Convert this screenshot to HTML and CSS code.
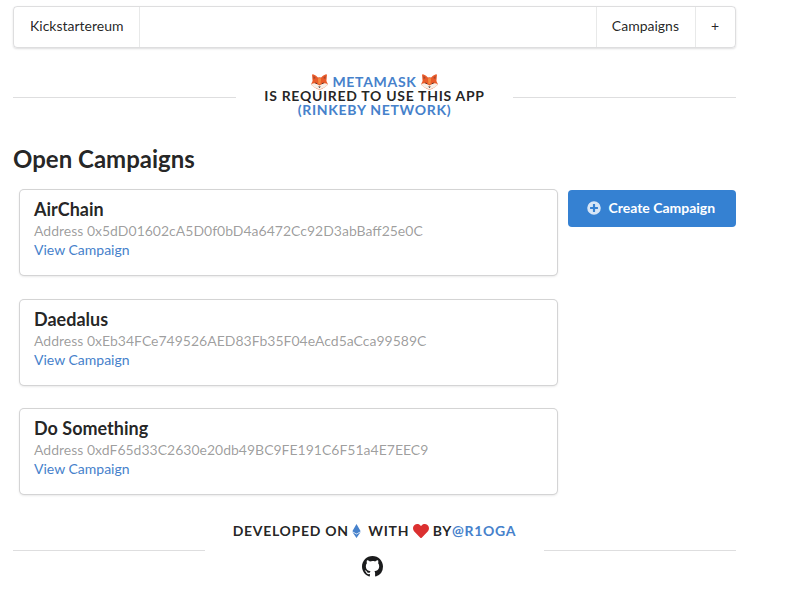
FILE: index.html
```html
<!DOCTYPE html>
<html lang="en">
<head>
<meta charset="utf-8">
<title>Kickstartereum</title>
<link rel="stylesheet" href="styles.css">
</head>
<body>
<svg width="0" height="0" class="sprite" aria-hidden="true">
  <symbol id="fox" viewBox="0 0 32 32" preserveAspectRatio="none">
    <path fill="#ea5b2a" d="M2 2Q2 0 5 1Q10 3 13 7Q16 6 19 7Q22 3 27 1Q30 0 30 2L29 14L32 21Q27 26 22 29Q16 33 10 29Q5 26 0 21L3 14Z"/>
    <path fill="#a3482f" d="M4.500 4Q7 5 9 8L5 10ZM27.500 4Q25 5 23 8L27 10Z"/>
    <path fill="#f28a42" d="M13 9Q16 7 19 9L18 20H14Z"/>
    <path fill="#f8efe6" d="M0 21Q6 17 11 20L16 23L21 20Q26 17 32 21Q27 27 21 29Q16 32 11 29Q5 27 0 21Z"/>
    <path fill="#3c2925" d="M7 17Q11 17 12.500 20.500Q9 20.500 7 17ZM25 17Q21 17 19.500 20.500Q23 20.500 25 17ZM13.500 25H18.500L16 28Z"/>
  </symbol>
</svg>
<div class="container">
  <nav class="menu">
    <a class="item brand">Kickstartereum</a>
    <div class="right">
      <a class="item">Campaigns</a>
      <a class="item plus">+</a>
    </div>
  </nav>
  <div class="divider notice">
    <div class="label">
      <div class="metamask"><svg class="fox"><use href="#fox"/></svg><a>Metamask</a><svg class="fox"><use href="#fox"/></svg></div>
      <div>is required to use this app</div>
      <div><a>(Rinkeby Network)</a></div>
    </div>
  </div>
  <h3>Open Campaigns</h3>
  <main>
    <div class="cards">
      <article class="card"><h4>AirChain</h4><p>Address 0x5dD01602cA5D0f0bD4a6472Cc92D3abBaff25e0C</p><a>View Campaign</a></article>
      <article class="card"><h4>Daedalus</h4><p>Address 0xEb34FCe749526AED83Fb35F04eAcd5aCca99589C</p><a>View Campaign</a></article>
      <article class="card"><h4>Do Something</h4><p>Address 0xdF65d33C2630e20db49BC9FE191C6F51a4E7EEC9</p><a>View Campaign</a></article>
    </div>
    <button class="create">
      <svg viewBox="0 0 512 512"><path fill="currentColor" fill-rule="evenodd" d="M256 8a248 248 0 1 0 0 496 248 248 0 0 0 0-496zm144 276c0 7-5 12-12 12h-92v92c0 7-5 12-12 12h-56c-7 0-12-5-12-12v-92h-92c-7 0-12-5-12-12v-56c0-7 5-12 12-12h92v-92c0-7 5-12 12-12h56c7 0 12 5 12 12v92h92c7 0 12 5 12 12z"/></svg>
      <span>Create Campaign</span>
    </button>
  </main>
  <footer class="divider">
    <div class="label">
      <div class="credit"><span>Developed on</span><svg class="eth" viewBox="0 0 320 512"><path fill="currentColor" d="M312 261 160 353 8 261 160 0zM160 383 8 291l152 221 152-221z"/></svg><span>with</span><svg class="heart" viewBox="0 0 512 512"><path fill="currentColor" d="M462 62c-55-46-136-38-186 14l-20 20-20-20C186 24 105 16 50 62c-63 54-66 150-10 208l193 200c13 13 33 13 46 0l193-200c56-58 53-154-10-208z"/></svg><span>by</span><a>@r1oga</a></div>
      <svg class="github" viewBox="0 0 16 16"><path fill="currentColor" d="M8 0C3.58 0 0 3.58 0 8c0 3.54 2.29 6.53 5.47 7.59.4.07.55-.17.55-.38 0-.19-.01-.82-.01-1.49-2.01.37-2.53-.49-2.69-.94-.09-.23-.48-.94-.82-1.13-.28-.15-.68-.52-.01-.53.63-.01 1.08.58 1.23.82.72 1.21 1.87.87 2.33.66.07-.52.28-.87.51-1.07-1.78-.2-3.64-.89-3.64-3.95 0-.87.31-1.59.82-2.15-.08-.2-.36-1.02.08-2.12 0 0 .67-.21 2.2.82A7.6 7.6 0 0 1 8 3.86c.68 0 1.36.09 2 .27 1.53-1.04 2.2-.82 2.2-.82.44 1.1.16 1.92.08 2.12.51.56.82 1.27.82 2.15 0 3.07-1.87 3.75-3.65 3.95.29.25.54.73.54 1.48 0 1.07-.01 1.93-.01 2.2 0 .21.15.46.55.38A8 8 0 0 0 16 8c0-4.42-3.58-8-8-8z"/></svg>
    </div>
  </footer>
</div>
</body>
</html>
```

FILE: styles.css
```css
* { box-sizing: border-box; }
body { margin: 0; background: #fff; color: rgba(0,0,0,.87); font: 14px/20px Lato, "Liberation Sans", sans-serif; overflow: hidden; }
a { color: #4681cb; }
.sprite { display: block; }
.container { width: 723px; margin: 6px 0 0 13px; }
.menu { display: flex; height: 42px; border: 1px solid rgba(34,36,38,.15); border-radius: 4px; box-shadow: 0 1px 2px rgba(34,36,38,.15); }
.menu .item { display: flex; align-items: center; padding: 0 16px 2px; color: rgba(0,0,0,.87); line-height: 14px; }
.brand { border-right: 1px solid rgba(34,36,38,.1); }
.right { display: flex; margin-left: auto; }
.right .item { border-left: 1px solid rgba(34,36,38,.1); padding-left: 15px; }
.menu .plus { width: 40px; }
.divider { display: flex; align-items: center; text-align: center; font-weight: 700; line-height: 14px; letter-spacing: .7px; text-transform: uppercase; }
.divider::before, .divider::after { content: ""; flex: 1; height: 1px; background: rgba(34,36,38,.15); }
.divider .label { padding: 0 28px; }
.notice { margin-top: 27px; height: 42px; }
.notice::before, .notice::after { margin-top: 2px; }
.notice .label div { height: 14px; white-space: nowrap; }
.notice .metamask { display: flex; justify-content: center; align-items: center; gap: 4px; }
.fox { width: 17px; height: 16px; flex: none; }
h3 { margin: 26px 0 0; height: 31px; font-size: 24px; line-height: 31px; font-weight: 700; }
main { display: flex; justify-content: space-between; align-items: flex-start; margin-top: 16px; }
.cards { display: flex; flex-direction: column; gap: 24.5px; margin-left: 7px; width: 537px; }
.card { height: 85px; padding: 9px 14px; border-radius: 4px; box-shadow: 0 1px 3px #d4d4d5, 0 0 0 1px #d4d4d5; }
.card h4 { margin: 0; font-size: 18px; line-height: 21px; font-weight: 700; }
.card p { margin: 1px 0 0; line-height: 20px; color: rgba(0,0,0,.4); }
.card a { display: block; line-height: 18px; }
.create { display: flex; align-items: center; width: 168px; height: 37px; padding: 0 19px 2px; border: 0; border-radius: 4px; background: #3581d2; color: #fff; font: 700 14px/14px Lato, sans-serif; white-space: nowrap; }
.create svg { width: 14px; height: 14px; margin-right: 7.4px; opacity: .8; }
footer { margin-top: 29px; height: 54px; }
.credit { display: flex; align-items: center; height: 14px; white-space: nowrap; }
.eth { width: 9px; height: 14px; color: #4681cb; margin: 0 7.6px 0 3px; }
.heart { width: 16px; height: 16px; color: #db3030; margin: 0 4px 0 3.6px; }
.github { display: block; width: 21px; height: 21px; margin: 18px 0 -1px 129.500px; color: #1b1c1d; }
```
